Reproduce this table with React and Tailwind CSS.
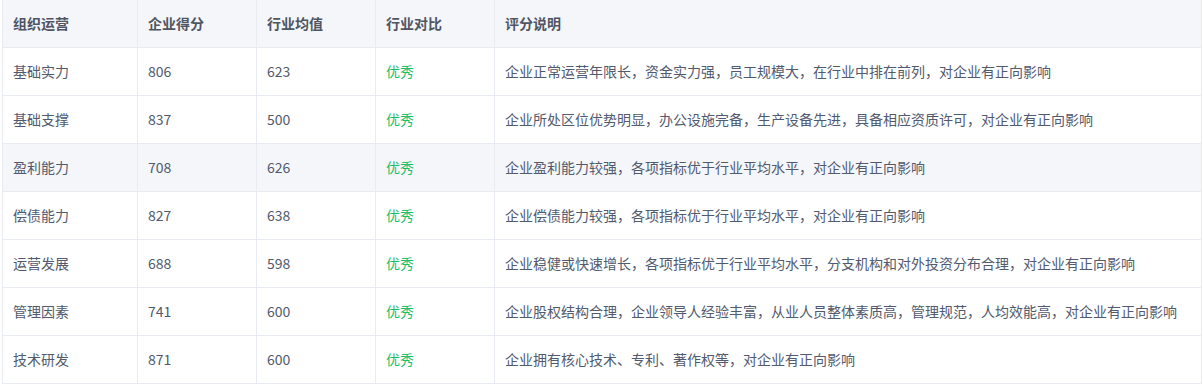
const rows = [
  ['基础实力', 806, 623, '优秀', '企业正常运营年限长，资金实力强，员工规模大，在行业中排在前列，对企业有正向影响'],
  ['基础支撑', 837, 500, '优秀', '企业所处区位优势明显，办公设施完备，生产设备先进，具备相应资质许可，对企业有正向影响'],
  ['盈利能力', 708, 626, '优秀', '企业盈利能力较强，各项指标优于行业平均水平，对企业有正向影响'],
  ['偿债能力', 827, 638, '优秀', '企业偿债能力较强，各项指标优于行业平均水平，对企业有正向影响'],
  ['运营发展', 688, 598, '优秀', '企业稳健或快速增长，各项指标优于行业平均水平，分支机构和对外投资分布合理，对企业有正向影响'],
  ['管理因素', 741, 600, '优秀', '企业股权结构合理，企业领导人经验丰富，从业人员整体素质高，管理规范，人均效能高，对企业有正向影响'],
  ['技术研发', 871, 600, '优秀', '企业拥有核心技术、专利、著作权等，对企业有正向影响'],
];

const headers = ['组织运营', '企业得分', '行业均值', '行业对比', '评分说明'];

export default function App() {
  return (
    <div
      className="bg-white pl-[2px] text-[14px] text-[#515a6e]"
      style={{ fontFamily: '"Noto Sans CJK SC", "Noto Sans", sans-serif' }}
    >
      <table className="w-[1200px] table-fixed border-collapse">
        <colgroup>
          <col className="w-[135px]" />
          <col className="w-[119px]" />
          <col className="w-[119px]" />
          <col className="w-[119px]" />
          <col />
        </colgroup>
        <thead>
          <tr className="h-[47px] bg-[#f5f6fa]">
            {headers.map((h) => (
              <th
                key={h}
                className="border border-t-0 border-[#e9ebf2] px-[10px] text-left font-bold text-[#4f5563]"
              >
                {h}
              </th>
            ))}
          </tr>
        </thead>
        <tbody>
          {rows.map((r, i) => (
            <tr key={r[0]} className={i === 2 ? 'h-[48px] bg-[#f5f6fa]' : 'h-[48px]'}>
              <td className="border border-[#e9ebf2] px-[10px]">{r[0]}</td>
              <td className="border border-[#e9ebf2] px-[10px]">{r[1]}</td>
              <td className="border border-[#e9ebf2] px-[10px]">{r[2]}</td>
              <td className="border border-[#e9ebf2] px-[10px] text-[#19be6b]">{r[3]}</td>
              <td className="border border-[#e9ebf2] px-[10px]">{r[4]}</td>
            </tr>
          ))}
        </tbody>
      </table>
    </div>
  );
}
